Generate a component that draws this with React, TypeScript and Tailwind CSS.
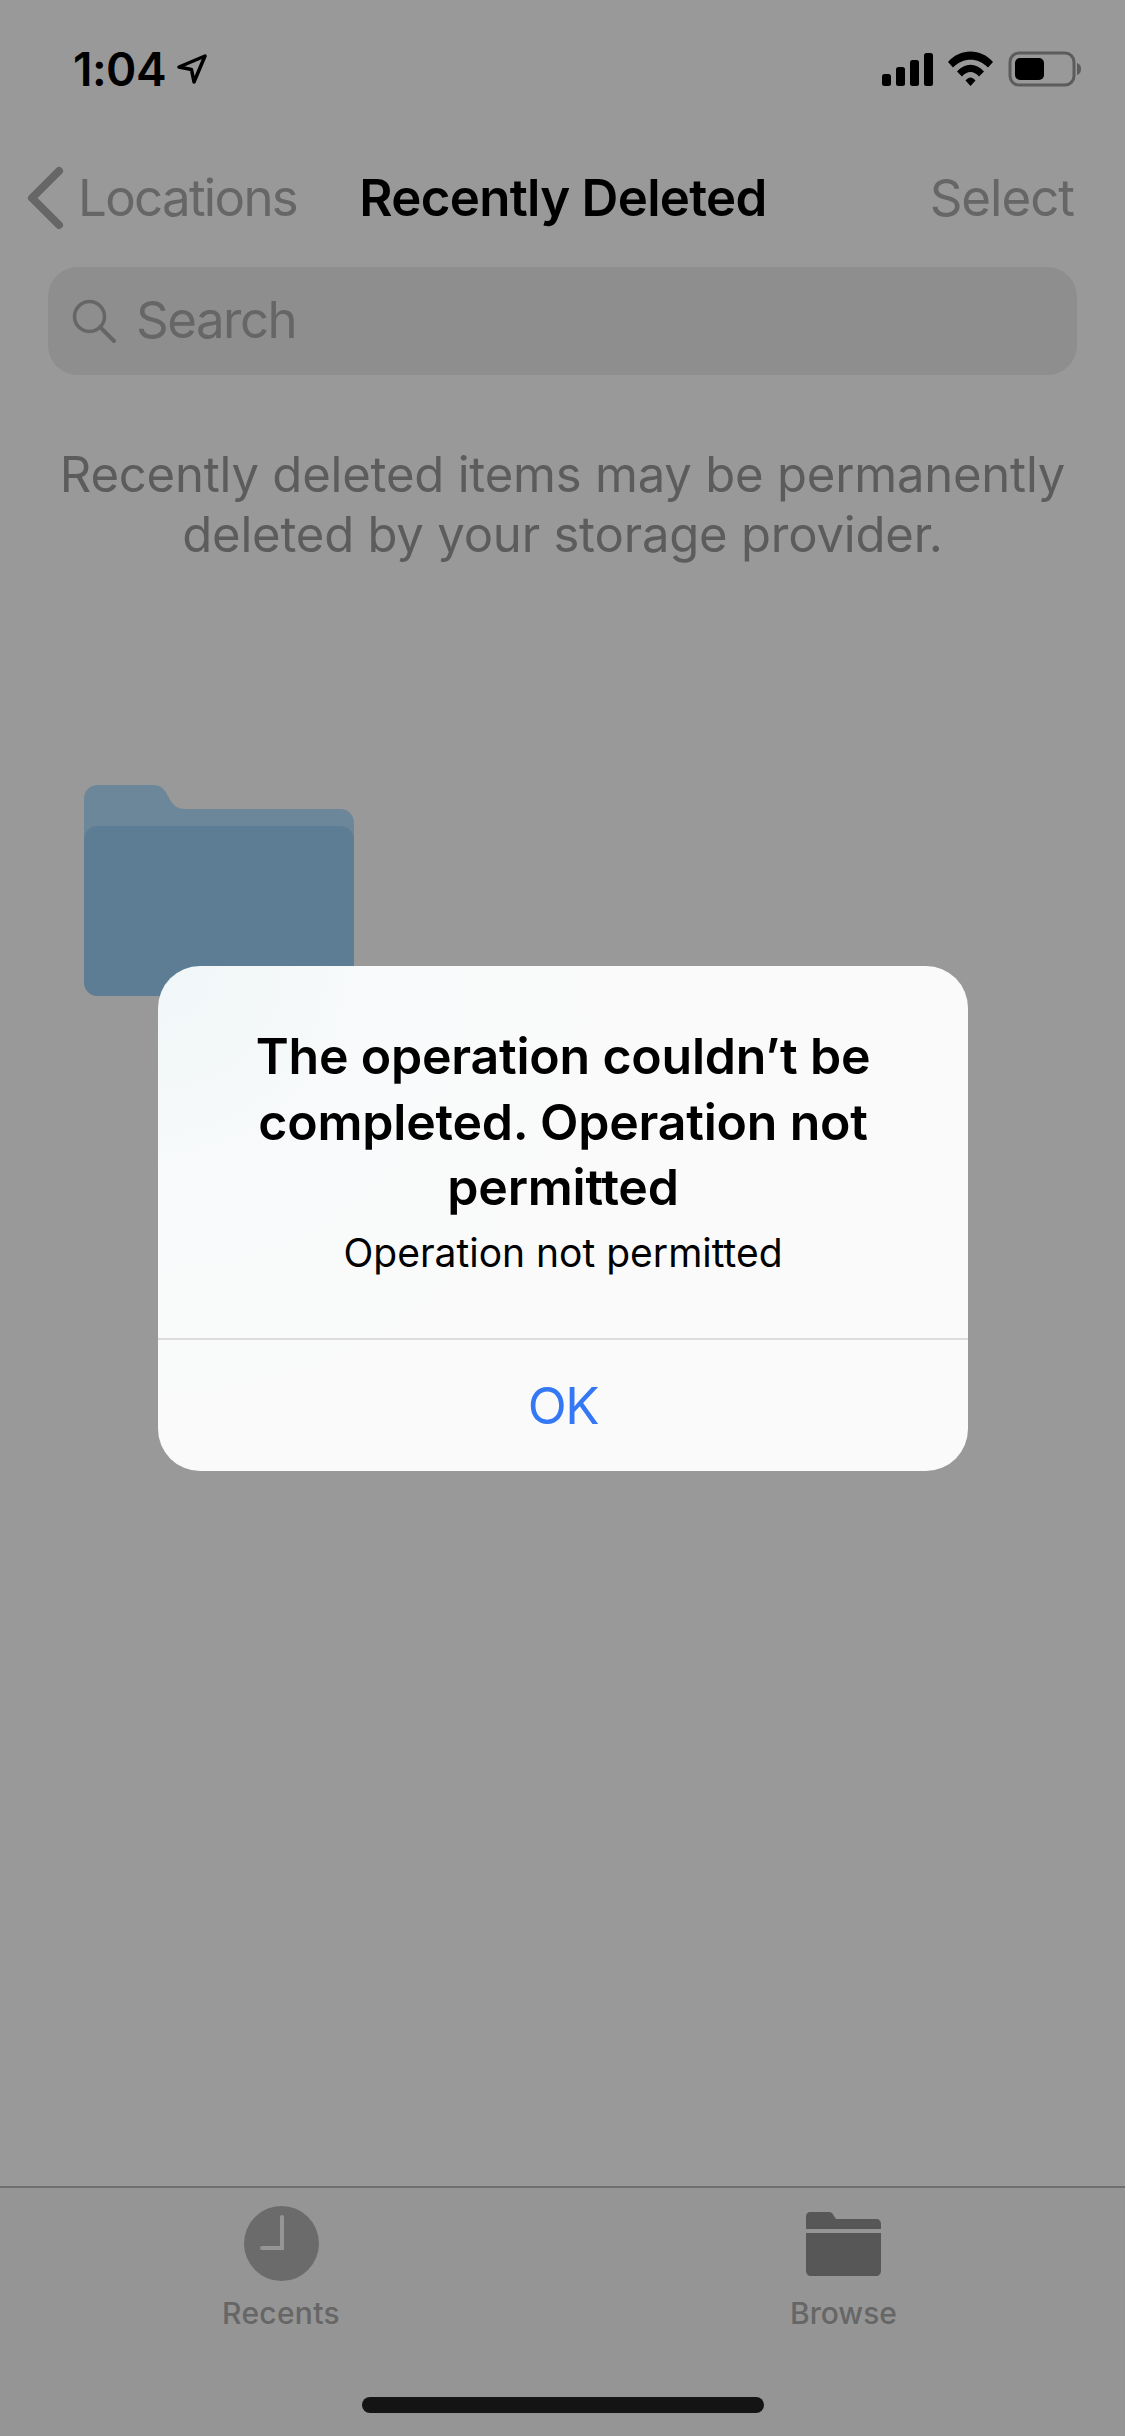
import React from 'react';

const font = { fontFamily: 'Inter, "Noto Sans", sans-serif' };

// status bar glyphs
const StatusIcons = () => (
    <svg width="204" height="40" viewBox="0 0 204 40" className="block">
        {/* signal */}
        <rect x="4" y="24" width="9" height="12" rx="2.5" fill="#000" />
        <rect x="18" y="17" width="9" height="19" rx="2.5" fill="#000" />
        <rect x="32" y="10" width="9" height="26" rx="2.5" fill="#000" />
        <rect x="46" y="3" width="9" height="33" rx="2.5" fill="#000" />
        {/* wifi */}
        <path d="M70 12 C82 -2 103 -2 115 12 L110 17.5 C100 7 85 7 75 17.5 Z" fill="#000" />
        <path d="M79 21.5 C87 12.5 98 12.5 106 21.5 L101 26.5 C96 20.5 89 20.5 84 26.5 Z" fill="#000" />
        <path d="M87.5 30.5 C91 26.5 94 26.5 97.5 30.5 L92.5 36 Z" fill="#000" />
        {/* battery */}
        <rect x="132" y="3" width="64" height="32" rx="9" fill="none" stroke="#5c5c5c" strokeWidth="3" />
        <rect x="137" y="8" width="29" height="22" rx="5" fill="#000" />
        <path d="M199 13 C202 14 203 16 203 19 C203 22 202 24 199 25 Z" fill="#5c5c5c" />
    </svg>
);

const App: React.FC = () => {
    return (
        <div style={font} className="relative w-[1125px] h-[2436px] bg-[#999999] flex flex-col overflow-hidden">
            {/* Status bar */}
            <div className="h-[132px] flex justify-between pt-[50px] pl-[73px] pr-[43px]">
                <div className="flex items-start gap-[11px]">
                    <span className="text-[46px] leading-[38px] font-semibold text-black tracking-[-0.5px]">1:04</span>
                    <svg width="30" height="30" viewBox="0 0 30 30" className="mt-[4px]">
                        <path d="M2 13 L28 2 L17 28 L14.5 15.5 Z" fill="none" stroke="#000" strokeWidth="3.5" strokeLinejoin="round" />
                    </svg>
                </div>
                <StatusIcons />
            </div>

            {/* Nav bar */}
            <div className="h-[135px] grid grid-cols-[1fr_auto_1fr] items-start pl-[27px] pr-[51px] pt-[34px]">
                <div className="flex items-center gap-[14px]">
                    <svg width="37" height="64" viewBox="0 0 37 64">
                        <path d="M32 5 L5 32 L32 59" fill="none" stroke="#666666" strokeWidth="8" strokeLinecap="round" strokeLinejoin="round" />
                    </svg>
                    <span className="text-[51px] leading-[64px] text-[#666666] tracking-[-1.7px]">Locations</span>
                </div>
                <span className="text-[51px] leading-[64px] font-semibold text-black tracking-[-0.7px] pl-[25px]">Recently Deleted</span>
                <span className="justify-self-end text-[51px] leading-[64px] text-[#666666] tracking-[-1px]">Select</span>
            </div>

            {/* Search */}
            <div className="mx-[48px] h-[108px] rounded-[30px] bg-[#8e8e8e] flex items-center pl-[24px] gap-[20px]">
                <svg width="44" height="44" viewBox="0 0 44 44">
                    <circle cx="17.5" cy="17.5" r="15" fill="none" stroke="#666666" strokeWidth="3.5" />
                    <path d="M28 28 L42 42" stroke="#666666" strokeWidth="4" strokeLinecap="round" />
                </svg>
                <span className="text-[51px] leading-[64px] text-[#666666] tracking-[-1.5px] -mt-[2px]">Search</span>
            </div>

            {/* Notice */}
            <p className="mt-[70px] text-center text-[49px] leading-[60px] text-[#5c5c5c] tracking-[-0.2px]">
                Recently deleted items may be permanently
                <br />
                deleted by your storage provider.
            </p>

            {/* Folder */}
            <div className="mt-[220px] ml-[84px]">
                <svg width="270" height="211" viewBox="0 0 270 211" className="block">
                    <path d="M14 0 H68 C76 0 80 3 84 11 C89 21 93 24 102 24 H256 C264 24 270 30 270 38 V197 C270 205 264 211 256 211 H14 C6 211 0 205 0 197 V14 C0 6 6 0 14 0 Z" fill="#6b8799" />
                    <path d="M14 41 H256 C264 41 270 47 270 55 V197 C270 205 264 211 256 211 H14 C6 211 0 205 0 197 V55 C0 47 6 41 14 41 Z" fill="#5c7d93" />
                </svg>
            </div>

            {/* Tab bar */}
            <div className="mt-auto h-[250px] bg-[#959595] border-t-2 border-[#707070] relative">
                <div className="flex">
                    <div className="w-[562px] flex flex-col items-center pt-[18px]">
                        <svg width="75" height="75" viewBox="0 0 75 75" className="block">
                            <circle cx="37.5" cy="37.5" r="37.5" fill="#6b6b6b" />
                            <path d="M38 11 V42 H18" fill="none" stroke="#959595" strokeWidth="4" strokeLinecap="round" />
                        </svg>
                        <span className="mt-[12px] text-[30px] leading-[40px] font-medium text-[#666666] tracking-[0.3px]">Recents</span>
                    </div>
                    <div className="w-[563px] flex flex-col items-center pt-[24px]">
                        <svg width="75" height="64" viewBox="0 0 75 64" className="block">
                            <path d="M4 0 H22 C26 0 27 2 28 4 L30 7 H71 C73 7 75 9 75 12 V17 H0 V4 C0 2 2 0 4 0 Z" fill="#575757" />
                            <path d="M0 21 H75 V58 C75 62 73 64 70 64 H5 C2 64 0 62 0 58 Z" fill="#575757" />
                        </svg>
                        <span className="mt-[17px] text-[30px] leading-[40px] font-medium text-[#666666]">Browse</span>
                    </div>
                </div>
                <div className="absolute left-[362px] top-[209px] w-[402px] h-[16px] rounded-full bg-[#141414]" />
            </div>

            {/* Alert */}
            <div className="absolute left-[158px] top-[966px] w-[810px] h-[505px] rounded-[42px] flex flex-col bg-[radial-gradient(circle_at_0%_0%,#f0f7f8_0%,#f9fafb_25%,#fafafa_50%)]">
                <div className="h-[372px] flex flex-col items-center pt-[58px]">
                    <h1 className="text-[50px] leading-[65.5px] font-semibold text-black text-center tracking-[-0.2px]">
                        The operation couldn’t be
                        <br />
                        completed. Operation not
                        <br />
                        permitted
                    </h1>
                    <p className="mt-[2px] text-[39px] leading-[60px] text-black">Operation not permitted</p>
                </div>
                <div className="flex-1 border-t-2 border-[#dcdcdc] flex items-center justify-center">
                    <span className="text-[51px] leading-[64px] text-[#3478f6] tracking-[-1.5px]">OK</span>
                </div>
            </div>
        </div>
    );
};

export default App;
